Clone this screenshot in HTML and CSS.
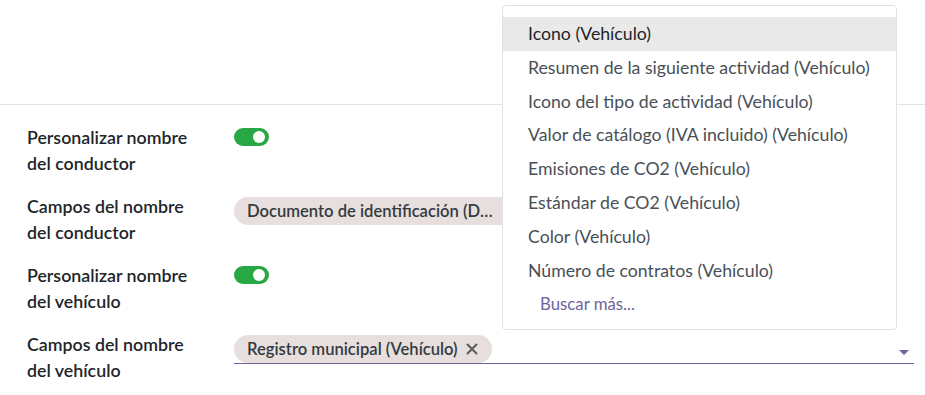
FILE: index.html
```html
<!DOCTYPE html>
<html lang="es">
<head>
<meta charset="utf-8">
<link rel="stylesheet" href="styles.css">
</head>
<body>
<div class="top"></div>
<div class="form">
  <div class="row">
    <div class="label">Personalizar nombre<br>del conductor</div>
    <div class="value"><span class="toggle"><span class="knob"></span></span></div>
  </div>
  <div class="row">
    <div class="label">Campos del nombre<br>del conductor</div>
    <div class="value"><span class="tag tag-wide">Documento de identificación (Documento de identidad)</span></div>
  </div>
  <div class="row">
    <div class="label">Personalizar nombre<br>del vehículo</div>
    <div class="value"><span class="toggle"><span class="knob"></span></span></div>
  </div>
  <div class="row">
    <div class="label">Campos del nombre<br>del vehículo</div>
    <div class="value">
      <div class="field">
        <span class="tag">Registro municipal (Vehículo)<svg class="x" viewBox="0 0 12 12" width="12" height="12"><path d="M1.5 1.5 L10.5 10.5 M10.5 1.5 L1.5 10.5" stroke="#5a5a5a" stroke-width="2" stroke-linecap="round"/></svg></span>
        <span class="caret"></span>
      </div>
    </div>
  </div>
</div>
<ul class="dropdown">
  <li class="item active">Icono (Vehículo)</li>
  <li class="item">Resumen de la siguiente actividad (Vehículo)</li>
  <li class="item">Icono del tipo de actividad (Vehículo)</li>
  <li class="item">Valor de catálogo (IVA incluido) (Vehículo)</li>
  <li class="item">Emisiones de CO2 (Vehículo)</li>
  <li class="item">Estándar de CO2 (Vehículo)</li>
  <li class="item">Color (Vehículo)</li>
  <li class="item">Número de contratos (Vehículo)</li>
  <li class="item more">Buscar más...</li>
</ul>
</body>
</html>
```
FILE: styles.css
```css
html, body {
  margin: 0;
  padding: 0;
  background: #fff;
}
body {
  font-family: Lato, "Noto Sans", sans-serif;
  color: #212529;
  width: 925px;
  height: 395px;
  overflow: hidden;
  position: relative;
}
.top {
  height: 104px;
  border-bottom: 1px solid #e3e3e3;
}
.form {
  padding: 19px 0 0 27px;
  display: flex;
  flex-direction: column;
  gap: 17px;
}
.row {
  display: flex;
  align-items: flex-start;
}
.label {
  width: 207px;
  font-size: 17.8px;
  font-weight: 600;
  line-height: 26px;
  color: #212529;
  white-space: nowrap;
}
.value {
  flex: 1;
  padding-top: 4px;
}
.toggle {
  display: inline-block;
  width: 35px;
  height: 18px;
  border-radius: 9px;
  background: #28a745;
  position: relative;
}
.knob {
  position: absolute;
  right: 4px;
  top: 3px;
  width: 12px;
  height: 12px;
  border-radius: 50%;
  background: #fff;
}
.tag {
  display: inline-flex;
  align-items: center;
  height: 28px;
  padding: 0 14px 0 13px;
  border-radius: 14px;
  background: #e6dfdd;
  font-size: 16.6px;
  font-weight: 600;
  color: #343a40;
  white-space: nowrap;
  box-sizing: border-box;
}
.tag-wide {
  width: 300px;
  overflow: hidden;
  text-overflow: ellipsis;
  display: inline-block;
  line-height: 28px;
  padding-right: 39px;
}
.x {
  margin-left: 8px;
  display: block;
}
.field {
  width: 680px;
  border-bottom: 1px solid #71639e;
  display: flex;
  align-items: center;
  justify-content: space-between;
}
.caret {
  width: 0;
  height: 0;
  border-left: 5px solid transparent;
  border-right: 5px solid transparent;
  border-top: 5px solid #71639e;
  margin-right: 5px;
  margin-top: 6px;
}
.dropdown {
  position: absolute;
  left: 502px;
  top: 5px;
  width: 395px;
  height: 325px;
  box-sizing: border-box;
  margin: 0;
  padding: 11px 0 0;
  list-style: none;
  background: #fff;
  border: 1px solid #dee2e6;
  border-radius: 4px;
}
.item {
  height: 33.8px;
  line-height: 33.8px;
  padding-left: 25px;
  font-size: 17.7px;
  color: #495057;
  white-space: nowrap;
}
.item.active {
  background: #e9e9e9;
  color: #212529;
}
.item.more {
  padding-left: 37px;
  color: #71639e;
  font-size: 16.8px;
  height: 33px;
  line-height: 33px;
}
```
